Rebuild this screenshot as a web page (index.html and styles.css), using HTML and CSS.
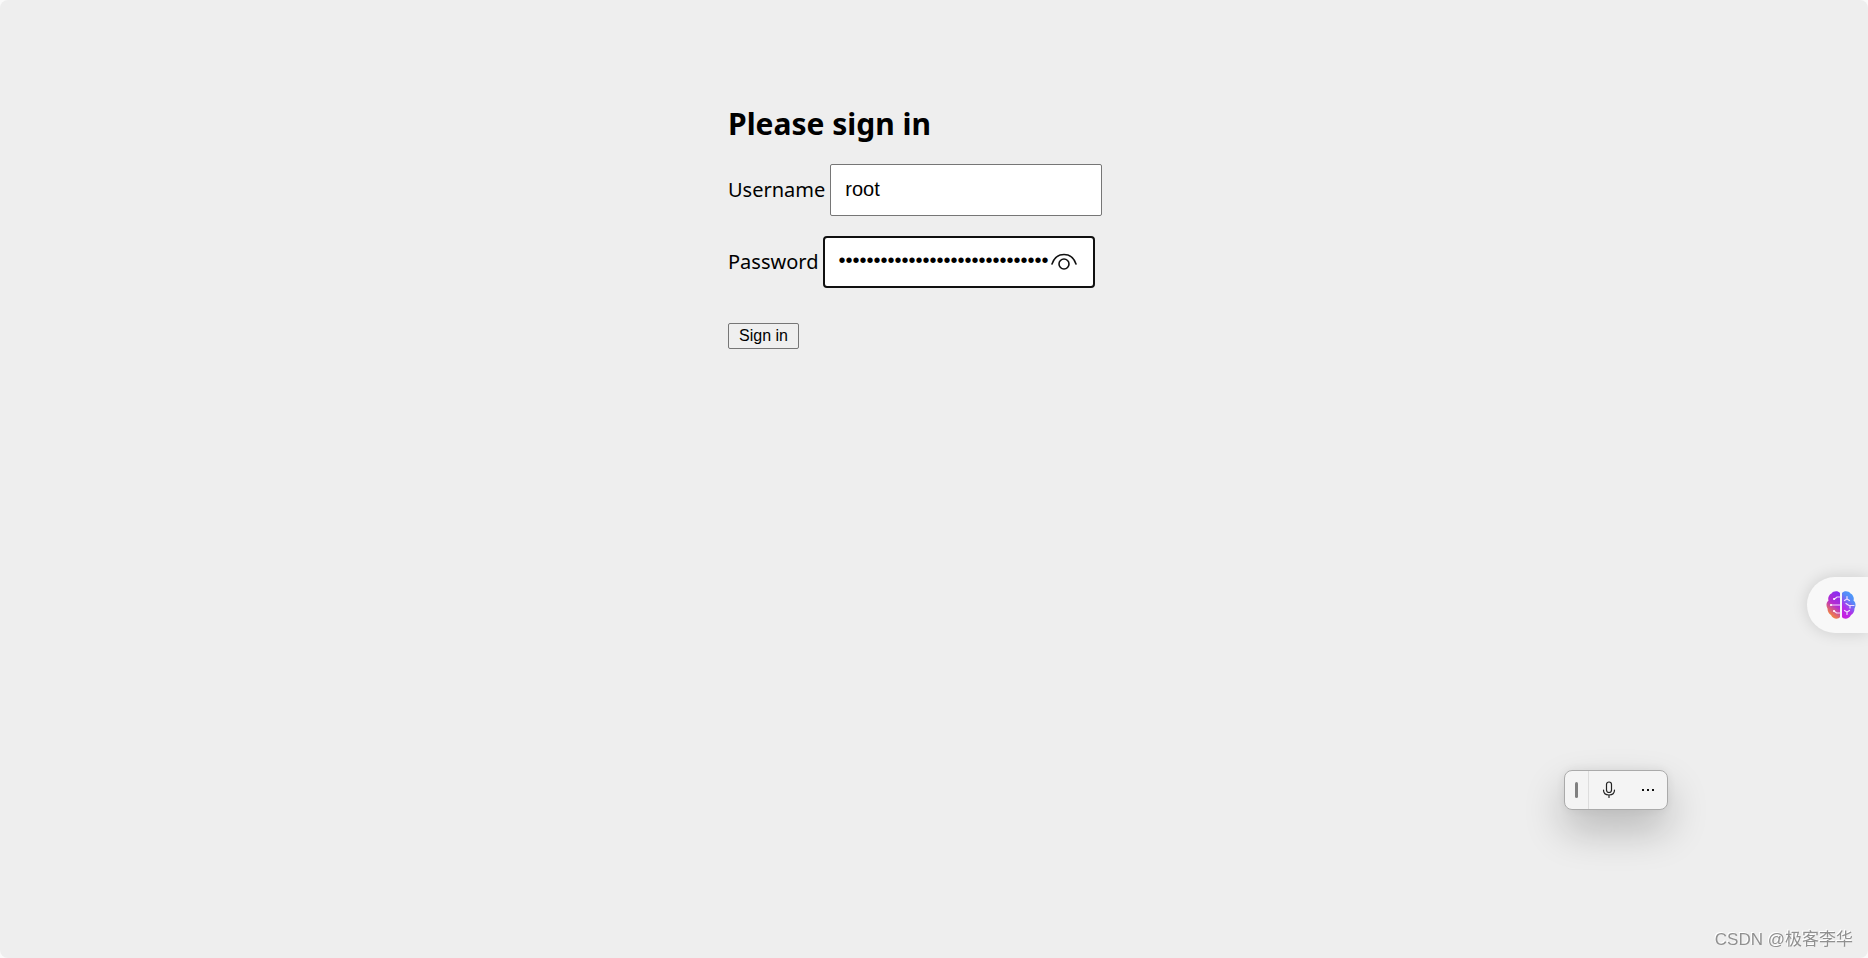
FILE: index.html
```html
<!DOCTYPE html>
<html lang="en">
<head>
    <meta charset="UTF-8">
    <meta name="viewport" content="width=device-width, initial-scale=1.0">
    <title>Please sign in</title>
    <link rel="stylesheet" href="styles.css">
</head>
<body>
    <!-- Sign in form -->
    <main class="container">
        <form class="form-signin" method="post" action="#">
            <h2 class="form-signin-heading">Please sign in</h2>
            <div class="form-row">
                <label for="username">Username</label>
                <input type="text" id="username" name="username" class="form-control" value="root" required>
            </div>
            <div class="form-row">
                <label for="password">Password</label>
                <div class="password-box">
                    <input type="password" id="password" name="password" class="form-control active" value="3f8c1a52-7b0e-4d69-a1c4-9e27d0" required>
                    <button type="button" class="reveal" aria-label="Show password">
                        <svg width="26" height="18" viewBox="0 0 26 18" fill="none" stroke="#111" stroke-width="1.6" stroke-linecap="round">
                            <path d="M1 11C3 5 7.500 1.500 13 1.500S23 5 25 11"/>
                            <circle cx="13" cy="11" r="5"/>
                        </svg>
                    </button>
                </div>
            </div>
            <button type="submit" class="btn">Sign in</button>
        </form>
    </main>

    <!-- Assistant tab -->
    <button type="button" class="assistant" aria-label="Assistant">
        <svg width="30" height="28" viewBox="0 0 30 28">
            <defs>
                <linearGradient id="left" x1="0.700" y1="0" x2="0.300" y2="1">
                    <stop offset="0" stop-color="#8a2cf0"/>
                    <stop offset="0.450" stop-color="#b52bd0"/>
                    <stop offset="0.850" stop-color="#ee7d4c"/>
                </linearGradient>
                <linearGradient id="right" x1="0.800" y1="0" x2="0.300" y2="1">
                    <stop offset="0" stop-color="#45a5fa"/>
                    <stop offset="0.350" stop-color="#5a86f7"/>
                    <stop offset="0.700" stop-color="#b030ea"/>
                    <stop offset="1" stop-color="#c81fe0"/>
                </linearGradient>
            </defs>
            <path fill="url(#left)" d="M14 2C12-.5 7 0 5.500 2.500 3 3.500 1.500 7 2.500 9.500 0 11.500 0 15.500 1.500 17.500 1.500 20.500 3 23 5 24 7 28.500 12.500 28.500 14 26Z"/>
            <path fill="url(#right)" d="M16 2C18-.5 23 0 24.500 2.500 27 3.500 28.500 7 27.500 9.500 30 11.500 30 15.500 28.500 17.500 28.500 20.500 27 23 25 24 23 28.500 17.500 28.500 16 26Z"/>
            <g fill="none" stroke="#f4dcff" stroke-width="1.200" stroke-linecap="round">
                <path d="M14 6H11L8.500 8M14 14H5M14 22H10.500L8 20"/>
                <path d="M18.500 9.500L21 8V5.500M21 8L23.500 9.500M20 12.500L23 14.500H28M24 14.500V17M18.500 19.500L21 21V23.500M21 21L23.500 19.500"/>
            </g>
            <circle cx="8" cy="8" r="1" fill="#fff"/>
            <circle cx="5" cy="14" r="1" fill="#fff"/>
            <circle cx="8" cy="20" r="1" fill="#fff"/>
        </svg>
    </button>

    <!-- Voice typing bar -->
    <div class="voice-bar">
        <div class="voice-handle"><span></span></div>
        <button type="button" aria-label="Microphone">
            <svg width="14" height="18" viewBox="0 0 14 18" fill="none" stroke="#222" stroke-width="1.200" stroke-linecap="round">
                <rect x="4.500" y="1" width="5" height="10.500" rx="2.500"/>
                <path d="M1.500 9C1.500 12.500 4 14 7 14S12.500 12.500 12.500 9M7 14V16.500"/>
            </svg>
        </button>
        <button type="button" aria-label="More">
            <svg width="12" height="2" viewBox="0 0 12 2" fill="#111">
                <rect width="2" height="2"/>
                <rect x="5" width="2" height="2"/>
                <rect x="10" width="2" height="2"/>
            </svg>
        </button>
    </div>

    <div class="watermark">CSDN @极客李华</div>
</body>
</html>
```
FILE: styles.css
```css
* {
    box-sizing: border-box;
}
html {
    background-color: #fafafa;
}
body {
    margin: 0;
    min-height: 100vh;
    padding: 50px 0;
    background-color: #eee;
    border-radius: 8px;
    color: #000;
    font-family: "Segoe UI", "Noto Sans", sans-serif;
    font-size: 20px;
}
/* Sign in form */
.container {
    padding: 0 20px;
}
.form-signin {
    max-width: 412px;
    margin: 0 auto;
    padding: 50px 0 20px;
}
.form-signin-heading {
    margin: 0 0 16px;
    font-size: 30px;
    line-height: 48px;
    font-weight: bold;
}
.form-row {
    display: flex;
    align-items: center;
    gap: 5px;
    margin-bottom: 20px;
}
.form-row label {
    padding-bottom: 2px;
}
.form-control {
    display: block;
    width: 272px;
    height: 52px;
    padding: 12px 14px 14px;
    border: 1px solid #767676;
    border-radius: 2px;
    background-color: #fff;
    color: #000;
    font-family: Arial, "Liberation Sans", sans-serif;
    font-size: 20px;
    outline: none;
}
.form-control.active {
    border: 2px solid #101010;
    border-radius: 4px;
    padding: 10px 40px 14px 13px;
}
.password-box {
    position: relative;
}
.reveal {
    position: absolute;
    top: 17px;
    right: 18px;
    padding: 0;
    border: none;
    background: none;
}
.reveal svg,
.assistant svg,
.voice-bar svg {
    display: block;
}
.btn {
    display: block;
    margin-top: 35px;
    padding: 0 10px;
    height: 26px;
    border: 1px solid #767676;
    border-radius: 2px;
    background-color: #efefef;
    color: #000;
    font-family: Arial, "Liberation Sans", sans-serif;
    font-size: 16px;
}
/* Assistant tab */
.assistant {
    position: fixed;
    right: 0;
    top: 577px;
    width: 61px;
    height: 56px;
    padding: 0 0 0 19px;
    border: none;
    border-radius: 28px 0 0 28px;
    background-color: #f8f8f8;
    box-shadow: 0 0 16px rgba(0, 0, 0, 0.14);
}
/* Voice typing bar */
.voice-bar {
    position: fixed;
    right: 200px;
    bottom: 148px;
    display: flex;
    width: 104px;
    height: 40px;
    border: 1px solid #aaa;
    border-radius: 8px;
    background-color: #f4f4f4;
    box-shadow: 0 20px 40px rgba(0, 0, 0, 0.24), 0 0 12px rgba(0, 0, 0, 0.08);
}
.voice-handle {
    display: flex;
    align-items: center;
    justify-content: center;
    width: 24px;
    border-right: 1px solid #ddd;
}
.voice-handle span {
    width: 3px;
    height: 16px;
    border-radius: 2px;
    background-color: #808080;
}
.voice-bar button {
    display: flex;
    flex: 1;
    align-items: center;
    justify-content: center;
    padding: 0;
    border: none;
    background: none;
}
.watermark {
    position: fixed;
    right: 15px;
    bottom: 6px;
    color: #909090;
    font-family: "Liberation Sans", "Noto Sans CJK SC", sans-serif;
    font-size: 17px;
    line-height: 24px;
    text-shadow: -1px -1px 0 #fff;
}
```
